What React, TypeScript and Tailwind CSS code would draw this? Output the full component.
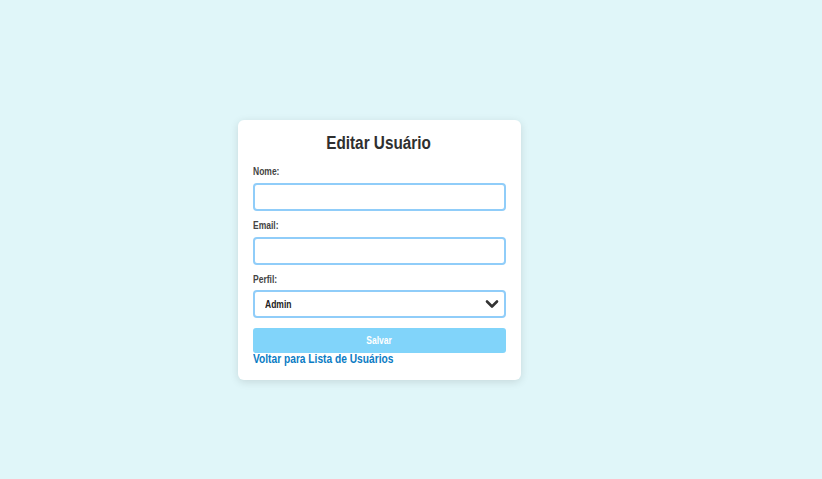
import React, { useState } from 'react';

const Narrow: React.FC<{ children: React.ReactNode; className?: string }> = ({ children, className = '' }) => (
  <span className={`inline-block whitespace-nowrap scale-x-[0.85] ${className}`}>{children}</span>
);

const App: React.FC = () => {
  const [perfil, setPerfil] = useState('admin');

  return (
    <div
      className="min-h-screen w-full bg-[#e0f6f9] flex items-center justify-center pr-[64px] pt-[21px]"
      style={{ fontFamily: '"Liberation Sans", Arial, sans-serif' }}
    >
      <div className="w-[283px] bg-white rounded-md shadow-[0_2px_8px_rgba(0,0,0,0.12)] pl-[15px] pr-[15px] pt-[12px] pb-[15px]">
        <h2 className="text-center text-[18px] font-bold text-[#2f2f2f] leading-[22px] mb-[12px]">
          <Narrow className="origin-center">Editar Usuário</Narrow>
        </h2>

        <label className="block text-[10px] font-bold text-[#444] leading-[12px] mb-[5px]">
          <Narrow className="origin-left">Nome:</Narrow>
        </label>
        <input
          type="text"
          className="block w-full h-[28px] border-2 border-[#90cdf9] rounded-[4px] px-2 text-[11px] outline-none mb-[9px]"
        />

        <label className="block text-[10px] font-bold text-[#444] leading-[12px] mb-[5px]">
          <Narrow className="origin-left">Email:</Narrow>
        </label>
        <input
          type="email"
          className="block w-full h-[28px] border-2 border-[#90cdf9] rounded-[4px] px-2 text-[11px] outline-none mb-[9px]"
        />

        <label className="block text-[10px] font-bold text-[#444] leading-[12px] mb-[4px]">
          <Narrow className="origin-left">Perfil:</Narrow>
        </label>
        <div className="relative mb-[10px] h-[28px] border-2 border-[#90cdf9] rounded-[4px] bg-white flex items-center pl-[10px] text-[10px] font-bold text-[#222]">
          <Narrow className="origin-left">{perfil === 'admin' ? 'Admin' : 'Usuário'}</Narrow>
          <svg
            className="absolute right-[5px] top-1/2 -translate-y-1/2 pointer-events-none"
            width="14"
            height="10"
            viewBox="0 0 14 10"
          >
            <path d="M2 2.5 L7 7.5 L12 2.5" fill="none" stroke="#333" strokeWidth="2.6" strokeLinecap="round" strokeLinejoin="round" />
          </svg>
          <select
            value={perfil}
            onChange={(e) => setPerfil(e.target.value)}
            className="absolute inset-0 w-full h-full opacity-0 cursor-pointer"
          >
            <option value="admin">Admin</option>
            <option value="user">Usuário</option>
          </select>
        </div>

        <button className="block w-full h-[25px] bg-[#81d4fa] rounded-[3px] text-white text-[10px] font-bold">
          <Narrow className="origin-center">Salvar</Narrow>
        </button>
        <a href="#" className="block text-[12px] font-bold text-[#0b7cc4] leading-[12px]">
          <Narrow className="origin-left">Voltar para Lista de Usuários</Narrow>
        </a>
      </div>
    </div>
  );
};

export default App;
